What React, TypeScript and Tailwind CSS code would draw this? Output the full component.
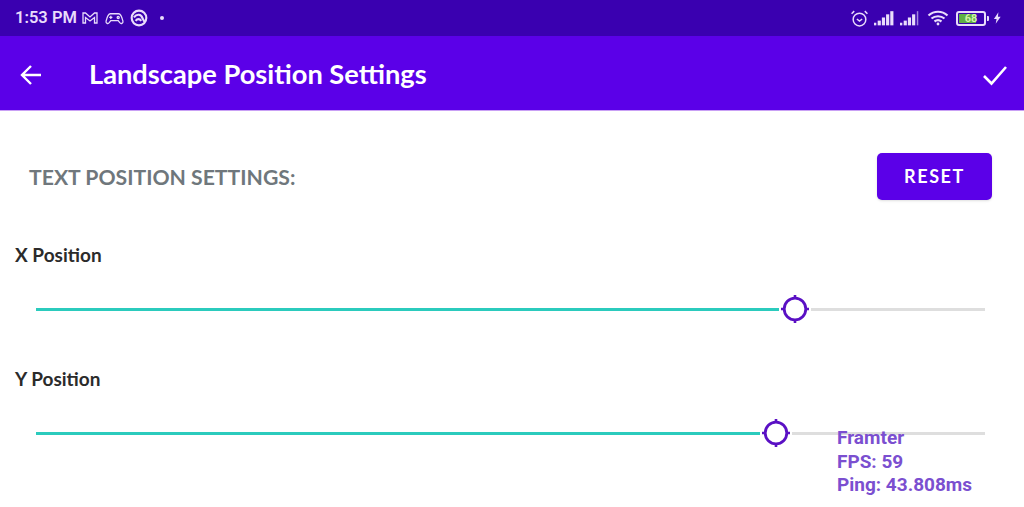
const sliders = [
  { label: "X Position", thumb: 759 },
  { label: "Y Position", thumb: 740 },
]

function Thumb({ left }: { left: number }) {
  return (
    <svg className="absolute top-[-15px] -ml-[16px]" style={{ left }} width="32" height="32" viewBox="0 0 32 32">
      <rect x="0" y="0" width="32" height="32" fill="#fff" />
      <circle cx="16" cy="16" r="10.800" fill="#fff" stroke="#5a10c4" strokeWidth="2.800" />
      <path d="M16 2v4M16 26v4M2 16h4M26 16h4" stroke="#5a10c4" strokeWidth="2.600" />
    </svg>
  )
}

function SliderRow({ label, thumb }: { label: string; thumb: number }) {
  return (
    <div>
      <div className="pl-[15px] h-[24px] leading-[24px] text-[19px] font-bold text-[#2b2b2b]">{label}</div>
      <div className="mt-[41px] ml-[36px] mr-[39px] h-[3px] bg-[#dedede] relative">
        <div className="h-full bg-[#2bcbbd]" style={{ width: thumb }} />
        <Thumb left={thumb} />
      </div>
    </div>
  )
}

function Signal({ weak }: { weak?: boolean }) {
  return (
    <svg width="21" height="16" viewBox="0 0 20 15" className="ml-[5px]" fill="currentColor">
      <rect x="0" y="12" width="2.200" height="2.500" />
      <rect x="3.500" y="10" width="3" height="4.500" />
      <rect x="7.500" y="7" width="3" height="7.500" />
      <rect x="11.500" y="4" width="3" height="10.500" />
      {weak ? (
        <rect x="16" y="1" width="1.400" height="13.500" opacity="0.6" />
      ) : (
        <rect x="15.500" y="1" width="3" height="13.500" />
      )}
    </svg>
  )
}

function StatusBar() {
  return (
    <div className="h-[36px] bg-[#3a00b0] flex items-center justify-between pl-[15px] pr-[22px] text-[#e9dcfb]">
      <div className="flex items-center">
        <span className="text-[16.500px] font-semibold font-['Roboto',sans-serif] w-[67px] whitespace-nowrap">1:53 PM</span>
        <svg width="16" height="14" viewBox="0 0 16 14" fill="none" stroke="currentColor" strokeWidth="1.300">
          <path d="M1 2h2.500L8 6l4.500-4H15v10h-2.500V6.500L8 10 3.500 6.500V12H1z" />
        </svg>
        <svg width="19" height="15" viewBox="0 0 18 14" fill="none" stroke="currentColor" strokeWidth="1.200" className="ml-[7px]">
          <path d="M5 2.500h8c2 0 3 3 4 7 .4 2-1.800 3-3 1.500L12.500 9h-7L4 11c-1.200 1.500-3.400.5-3-1.500 1-4 2-7 4-7z" />
          <path d="M4 6h3M5.500 4.500v3" />
          <circle cx="12.500" cy="6" r="1" />
        </svg>
        <svg width="18" height="18" viewBox="0 0 16 16" fill="none" stroke="currentColor" strokeWidth="1.900" className="ml-[6px]">
          <circle cx="8" cy="8" r="6.500" />
          <path d="M3.500 7.500C6 4 10 4.500 11 8l2 3.500M5 10.500c1.500-2 3.500-2 5 0" />
        </svg>
        <span className="w-[4px] h-[4px] rounded-full bg-[#e9dcfb] ml-[12px]" />
      </div>
      <div className="flex items-center">
        <svg width="19" height="19" viewBox="0 0 18 18" fill="none" stroke="currentColor" strokeWidth="1.400">
          <circle cx="9" cy="10" r="6" />
          <path d="M6.500 9.500 9 11.500l2.500-2M1.500 4.500 4 2M16.500 4.500 14 2" />
        </svg>
        <Signal />
        <Signal weak />
        <svg width="22" height="16" viewBox="0 0 22 16" fill="none" stroke="currentColor" strokeWidth="2.200" className="ml-[6px]">
          <path d="M1.500 5.500c5.500-5 13.500-5 19 0M4.500 8.500c3.500-3 9.500-3 13 0M7.500 11.500c2-1.500 5-1.500 7 0" />
          <circle cx="11" cy="14" r="1.400" fill="currentColor" stroke="none" />
        </svg>
        <div className="ml-[7px] w-[30px] h-[15px] rounded-[3px] border-[2px] border-[#e9dcfb] p-[1px] relative">
          <div className="h-full w-[17px] bg-[#5fae45]" />
          <span className="absolute inset-0 text-center text-[11px] leading-[11px] font-semibold text-[#d6f5a8] font-['Roboto',sans-serif]">68</span>
        </div>
        <span className="w-[2px] h-[5px] bg-[#e9dcfb] ml-[1px] rounded-r-[1px]" />
        <svg width="9" height="14" viewBox="0 0 10 13" fill="currentColor" className="ml-[4px]">
          <path d="M6 0 1 7.500h3L3 13l5.500-8H5.500z" />
        </svg>
      </div>
    </div>
  )
}

export default function App() {
  return (
    <main className="w-[1024px] h-[507px] bg-white overflow-hidden relative font-['Lato',sans-serif]">
      <StatusBar />

      {/* Toolbar */}
      <div className="h-[75px] pt-[3px] bg-[#5b00e8] flex items-center text-white border-b border-[#c9a0f5]">
        <svg width="24" height="24" viewBox="0 0 24 24" fill="none" stroke="currentColor" strokeWidth="2.400" className="ml-[19px]">
          <path d="M22 12H3M12 3l-9 9 9 9" />
        </svg>
        <h1 className="ml-[46px] text-[27.250px] font-bold">Landscape Position Settings</h1>
        <svg width="26" height="26" viewBox="0 0 26 26" fill="none" stroke="currentColor" strokeWidth="2.600" className="ml-auto mr-[16px]">
          <path d="M2 14l7.500 7.500L24 5" />
        </svg>
      </div>

      <div className="flex items-center justify-between pl-[29px] pr-[32px] pt-[42px]">
        <span className="text-[21.200px] font-bold text-[#6f777c] whitespace-nowrap pt-[2px]">TEXT POSITION SETTINGS:</span>
        <button className="w-[115px] h-[47px] bg-[#5b00e8] rounded-[5px] text-white text-[18px] font-bold tracking-[1.600px] shadow-sm">
          RESET
        </button>
      </div>

      <div className="mt-[43px] flex flex-col gap-[56px]">
        {sliders.map((s) => (
          <SliderRow key={s.label} label={s.label} thumb={s.thumb} />
        ))}
      </div>

      {/* FPS overlay */}
      <div className="absolute left-[837px] top-[426px] text-[19px] leading-[23.500px] font-bold text-[#7b4fd0] font-['Roboto',sans-serif] whitespace-nowrap">
        <div>Framter</div>
        <div>FPS: 59</div>
        <div>Ping: 43.808ms</div>
      </div>
    </main>
  )
}
